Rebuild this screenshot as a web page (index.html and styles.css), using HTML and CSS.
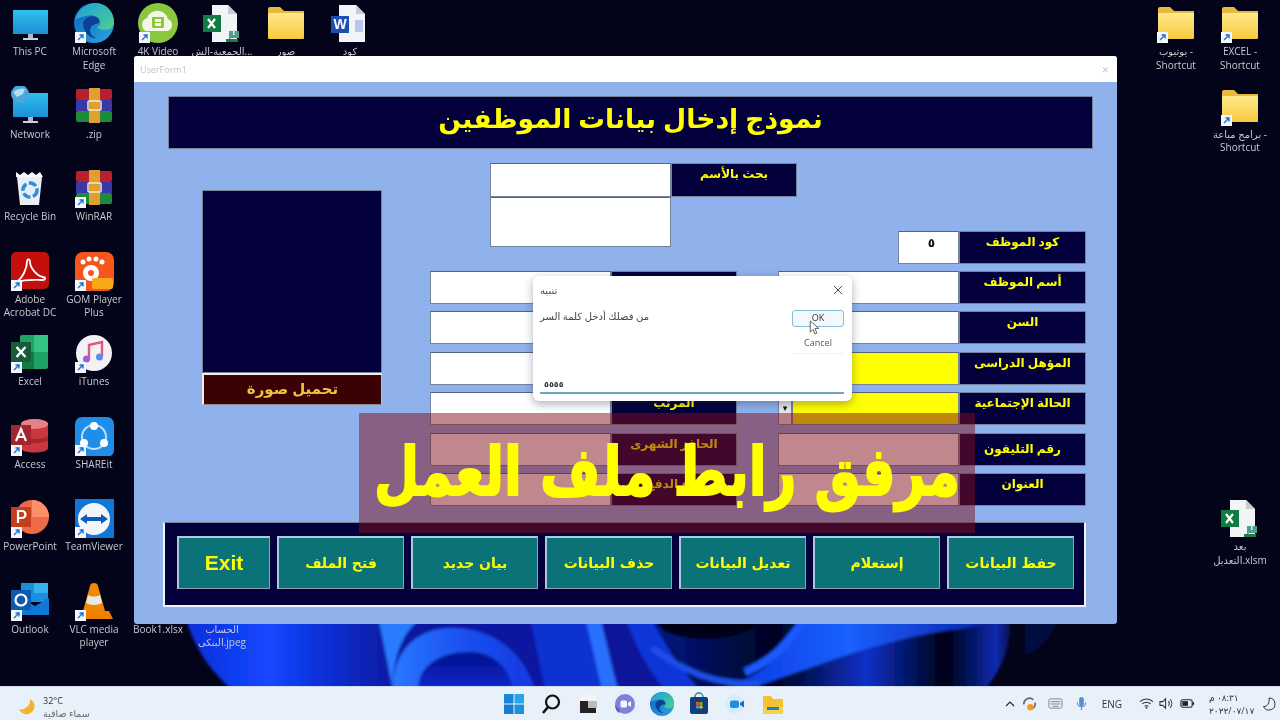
FILE: index.html
```html
<!DOCTYPE html>
<html lang="ar">
<head>
    <meta charset="UTF-8">
    <title>UserForm1</title>
    <link rel="stylesheet" href="styles.css">
</head>
<body>
<svg class="defs" width="0" height="0">
    <defs>
        <linearGradient id="gPc" x1="0" y1="0" x2="0" y2="1"><stop offset="0" stop-color="#2fc0ee"/><stop offset="1" stop-color="#1c8fd6"/></linearGradient>
        <linearGradient id="gFolder" x1="0" y1="0" x2="0" y2="1"><stop offset="0" stop-color="#ffe98a"/><stop offset="1" stop-color="#f7c93e"/></linearGradient>
        <linearGradient id="gEdge" x1="0" y1="0" x2="1" y2="1"><stop offset="0" stop-color="#0f5fc0"/><stop offset="1" stop-color="#2aa8e0"/></linearGradient>
        <linearGradient id="gEdgeTop" x1="0" y1="0" x2="1" y2="1"><stop offset="0" stop-color="#1a9fe0"/><stop offset="1" stop-color="#4fd08a"/></linearGradient>
        <linearGradient id="gWallA" x1="0" y1="0" x2="1" y2="0"><stop offset="0" stop-color="#0a2ed8"/><stop offset="0.4" stop-color="#1448ff"/><stop offset="0.65" stop-color="#0c30d8"/><stop offset="1" stop-color="#0a1aa0"/></linearGradient>
        <linearGradient id="gWallRing" x1="0" y1="0" x2="1" y2="0"><stop offset="0" stop-color="#2a78ff"/><stop offset="0.5" stop-color="#1a50f0"/><stop offset="1" stop-color="#1238e0"/></linearGradient>
        <linearGradient id="gWallIn" x1="0" y1="0" x2="0" y2="1"><stop offset="0" stop-color="#04108a"/><stop offset="1" stop-color="#0a28d0"/></linearGradient>
        <linearGradient id="gWallBase" x1="0" y1="0" x2="1" y2="0"><stop offset="0" stop-color="#06178a"/><stop offset="0.35" stop-color="#020320"/><stop offset="0.6" stop-color="#0a30c8"/><stop offset="0.82" stop-color="#000014"/><stop offset="0.96" stop-color="#0a2ab0"/><stop offset="1" stop-color="#06104a"/></linearGradient>
        <linearGradient id="gWallBand" x1="0" y1="0" x2="1" y2="0"><stop offset="0" stop-color="#0a38e0"/><stop offset="0.45" stop-color="#1a60ff"/><stop offset="1" stop-color="#0a20a0"/></linearGradient>
        <filter id="soft"><feGaussianBlur stdDeviation="1.500"/></filter>

        <g id="sc"><rect x="1" y="29" width="11" height="11" fill="#f4f8fc"/><path d="M4 37l5-5M5.500 32H9v3.500" fill="none" stroke="#1a6fd0" stroke-width="1.400"/></g>
        <g id="pc"><rect x="3" y="7" width="35" height="24" fill="url(#gPc)"/><rect x="18" y="31" width="5" height="4" fill="#aab8c4"/><rect x="13" y="35" width="15" height="2" fill="#c8d2da"/></g>
        <g id="net"><rect x="3" y="7" width="35" height="24" fill="url(#gPc)"/><rect x="18" y="31" width="5" height="4" fill="#aab8c4"/><rect x="13" y="35" width="15" height="2" fill="#c8d2da"/><circle cx="10" cy="8" r="9" fill="#4ba6dc"/><path d="M3 6q6-5 12-3l-2 5-6 3z" fill="#b8dcf0"/></g>
        <g id="edge"><circle cx="20" cy="20" r="20" fill="url(#gEdge)"/><path d="M1 17C4 5 14 0 21 0c11 0 19 8 19 19 0 4-3 8-8 8-5 0-8-1-9-3 3-1 4-3 3-6-2-5-8-7-14-5C7 14 3 15 1 17z" fill="url(#gEdgeTop)"/><path d="M9 20c2-6 8-8 13-6 3 1 4 4 3 6-4 1-9 2-9 8 0 3 3 6 7 7-7 1-14-6-14-15z" fill="#0d3f92"/></g>
        <g id="cloud"><circle cx="20" cy="20" r="20" fill="#8cc63f"/><path d="M8 28a7 7 0 0 1 1-13 11 11 0 0 1 21 1 6.500 6.500 0 0 1 0 12z" fill="#f2f7e8"/><rect x="14" y="14" width="12" height="11" rx="1" fill="#8cc63f"/><rect x="17" y="16" width="6" height="3" fill="#f2f7e8"/><rect x="17" y="20" width="6" height="3" fill="#f2f7e8"/></g>
        <g id="xdoc"><path d="M10 2h16l9 9v28H10z" fill="#f3f4f6"/><path d="M26 2l9 9h-9z" fill="#c9ccd2"/><rect x="1" y="12" width="18" height="17" fill="#107c41"/><path d="M6 16l7 9M13 16l-7 9" stroke="#fff" stroke-width="2.200"/><path d="M27 28h10v7h-8l-2 2z" fill="#4f9d8a"/><rect x="24" y="36" width="12" height="3" fill="#1c7a50"/><rect x="31" y="26" width="1.500" height="6" fill="#e8e8e8"/></g>
        <g id="folder"><path d="M2 6a2 2 0 0 1 2-2h10l4 4h20v27H2z" fill="#e9b93a"/><rect x="2" y="10" width="36" height="26" rx="1" fill="url(#gFolder)"/></g>
        <g id="word"><path d="M9 2h17l9 9v28H9z" fill="#f3f4f6"/><path d="M26 2l9 9h-9z" fill="#c9ccd2"/><rect x="25" y="17" width="8" height="12" fill="#b8c8ec"/><rect x="1" y="13" width="18" height="17" fill="#1b4fb4"/><text x="10" y="26" class="glyph" font-size="14">W</text></g>
        <g id="rar"><rect x="2" y="3" width="36" height="11" rx="2" fill="#b8202e"/><rect x="2" y="14" width="36" height="11" fill="#3a38a8"/><rect x="2" y="25" width="36" height="11" rx="2" fill="#1f8a3c"/><rect x="15" y="2" width="11" height="35" fill="#e0a030"/><rect x="14" y="15" width="13" height="9" rx="1" fill="none" stroke="#f4e8c8" stroke-width="1.500"/></g>
        <g id="bin"><path d="M7 9h25l-3 28H10z" fill="#e8eef4"/><path d="M6 4l4 3 4-3 4 3 4-3 4 3 4-3 3 5H6z" fill="#f8f9fa"/><circle cx="20" cy="22" r="7" fill="none" stroke="#2e8fd8" stroke-width="3.500" stroke-dasharray="8 2.500"/></g>
        <g id="pdf"><rect x="1" y="1" width="38" height="37" rx="5" fill="#c4100c"/><path d="M8 30c4-3 9-12 9-19 0-4 3-3 3 0 0 6 7 14 13 15 3 0 3 3-1 3-7 0-17-1-24 2z" fill="none" stroke="#fff" stroke-width="1.800"/></g>
        <g id="gom"><rect x="1" y="1" width="39" height="39" rx="8" fill="#f4561e"/><circle cx="17" cy="22" r="8" fill="#fff"/><circle cx="17" cy="22" r="3" fill="#f4561e"/><circle cx="9" cy="11" r="2.500" fill="#fff"/><circle cx="15" cy="8" r="2.500" fill="#fff"/><circle cx="22" cy="8" r="2.500" fill="#fff"/><circle cx="28" cy="11" r="2.500" fill="#fff"/><rect x="18" y="27" width="21" height="11" rx="2" fill="#f8a818"/></g>
        <g id="excel"><rect x="10" y="2" width="28" height="34" rx="2" fill="#21a366"/><rect x="24" y="2" width="14" height="17" fill="#33c481"/><rect x="10" y="19" width="14" height="17" fill="#107c41"/><rect x="1" y="9" width="20" height="20" fill="#185c37"/><path d="M6.500 14l9 10M15.500 14l-9 10" stroke="#fff" stroke-width="2.400"/></g>
        <g id="itunes"><circle cx="20" cy="20" r="18" fill="#f4f1f4"/><path d="M15 26V12l13-3v14" fill="none" stroke="#e0567e" stroke-width="2.400"/><circle cx="12.500" cy="26" r="3.500" fill="#9a62d8"/><circle cx="25.500" cy="24" r="3.500" fill="#5a8ce8"/></g>
        <g id="access"><path d="M11 8c0-6 27-6 27 0v24c0 6-27 6-27 0z" fill="#c8383e"/><ellipse cx="24.500" cy="8" rx="13.500" ry="5" fill="#e88088"/><path d="M11 20c4 4 23 4 27 0v4c-4 4-23 4-27 0z" fill="#a4262c"/><rect x="1" y="9" width="20" height="20" fill="#a4262c"/><path d="M6 25l5-12 5 12M8 21h6" fill="none" stroke="#fff" stroke-width="2.200"/></g>
        <g id="share"><rect x="1" y="1" width="39" height="40" rx="7" fill="#1e8ee8"/><circle cx="20" cy="21" r="12" fill="none" stroke="#bfe0f8" stroke-width="2"/><circle cx="20" cy="10" r="4" fill="#fff"/><circle cx="10" cy="27" r="4" fill="#fff"/><circle cx="30" cy="27" r="4" fill="#fff"/></g>
        <g id="ppt"><circle cx="22" cy="19" r="17" fill="#ed6c47"/><path d="M22 2a17 17 0 0 1 17 17H22z" fill="#ff8f6b"/><rect x="1" y="9" width="20" height="20" fill="#c43e1c"/><path d="M8 25V13h4a3.500 3.500 0 0 1 0 7H8" fill="none" stroke="#fff" stroke-width="2.200"/></g>
        <g id="tv"><rect x="1" y="1" width="39" height="40" fill="#0e77d8"/><circle cx="20" cy="21" r="16" fill="#f2f6fa"/><path d="M6 21l7-5v3h14v-3l7 5-7 5v-3H13v3z" fill="#0e5cb8"/></g>
        <g id="outlook"><rect x="11" y="2" width="27" height="19" fill="#1a8fe0"/><rect x="24" y="2" width="14" height="10" fill="#38b0f0"/><path d="M11 17l14 8 14-8v17H11z" fill="#0f78d4"/><rect x="1" y="9" width="20" height="20" fill="#0a5cb0"/><circle cx="11" cy="19" r="5.500" fill="none" stroke="#fff" stroke-width="2.200"/></g>
        <g id="vlc"><path d="M16 5c0-4 8-4 8 0l7 25H9z" fill="#f08800"/><path d="M14 14q6 3 12 0l2 8q-8 4-16 0z" fill="#e8e8e8"/><path d="M5 30h30l4 8H1z" fill="#f08000"/></g>
        <g id="tbWin"><rect x="2" y="2" width="9.500" height="9.500" fill="#1a86d8"/><rect x="12.500" y="2" width="9.500" height="9.500" fill="#28a4ea"/><rect x="2" y="12.500" width="9.500" height="9.500" fill="#1a7acc"/><rect x="12.500" y="12.500" width="9.500" height="9.500" fill="#1e90dc"/></g>
    </defs>
</svg>

<div class="screen">
    <div class="desktop">
        <svg class="wallpaper" viewBox="0 0 1280 686" width="1280" height="686">
            <g filter="url(#soft)">
                <path d="M185 616C195 650 210 670 232 690H395L378 616Z" fill="url(#gWallA)"/>
                <path d="M378 616H560L545 690H393Z" fill="#0a18a0"/>
                <path d="M393 690C392 650 418 628 452 628 495 628 525 655 535 690Z" fill="url(#gWallRing)"/>
                <path d="M378 616H425C402 628 392 660 393 690Z" fill="#2a7cff"/>
                <path d="M418 690C418 665 440 652 470 652 495 652 510 670 513 690Z" fill="url(#gWallIn)"/>
                <path d="M530 616H590L620 690H545C540 665 535 640 530 616Z" fill="#0a30d0"/>
                <path d="M585 616H600L618 690H602Z" fill="#2a70ff"/>
                <path d="M600 616H625C640 650 650 670 665 690H618Z" fill="#08169a"/>
                <path d="M625 616H650C665 645 680 665 700 690H665C645 665 635 645 625 616Z" fill="#0c34d8"/>
                <path d="M650 616H1010C1012 650 1000 670 985 690H700C685 665 665 645 650 616Z" fill="url(#gWallBase)"/>
                <path d="M800 616H1000C985 625 970 628 950 630 880 640 820 665 760 685 740 690 730 688 725 685 760 680 790 650 800 616Z" fill="url(#gWallBand)"/>
                <path d="M745 672C775 660 790 640 805 618" fill="none" stroke="#1a58ff" stroke-width="8"/>
                <path d="M652 648C690 675 715 684 760 684" fill="none" stroke="#1c50e8" stroke-width="6"/>
                <path d="M650 616H770C745 640 700 645 665 632Z" fill="#020216"/>
                <path d="M1025 616H1060C1050 640 1040 650 1025 655Z" fill="#060c40"/>
            </g>
        </svg>

        <div class="icon-grid icon-grid-left">
            <div class="item"><svg class="ico" viewBox="0 0 40 40"><use href="#pc"/></svg><span class="name">This PC</span></div>
            <div class="item"><svg class="ico" viewBox="0 0 40 40"><use href="#net"/></svg><span class="name">Network</span></div>
            <div class="item"><svg class="ico" viewBox="0 0 40 40"><use href="#bin"/></svg><span class="name">Recycle Bin</span></div>
            <div class="item"><svg class="ico" viewBox="0 0 40 40"><use href="#pdf"/><use href="#sc"/></svg><span class="name">Adobe Acrobat DC</span></div>
            <div class="item"><svg class="ico" viewBox="0 0 40 40"><use href="#excel"/><use href="#sc"/></svg><span class="name">Excel</span></div>
            <div class="item"><svg class="ico" viewBox="0 0 40 40"><use href="#access"/><use href="#sc"/></svg><span class="name">Access</span></div>
            <div class="item"><svg class="ico" viewBox="0 0 40 40"><use href="#ppt"/><use href="#sc"/></svg><span class="name">PowerPoint</span></div>
            <div class="item"><svg class="ico" viewBox="0 0 40 40"><use href="#outlook"/><use href="#sc"/></svg><span class="name">Outlook</span></div>

            <div class="item"><svg class="ico" viewBox="0 0 40 40"><use href="#edge"/><use href="#sc"/></svg><span class="name">Microsoft Edge</span></div>
            <div class="item"><svg class="ico" viewBox="0 0 40 40"><use href="#rar"/></svg><span class="name">.zip</span></div>
            <div class="item"><svg class="ico" viewBox="0 0 40 40"><use href="#rar"/><use href="#sc"/></svg><span class="name">WinRAR</span></div>
            <div class="item"><svg class="ico" viewBox="0 0 40 40"><use href="#gom"/><use href="#sc"/></svg><span class="name">GOM Player Plus</span></div>
            <div class="item"><svg class="ico" viewBox="0 0 40 40"><use href="#itunes"/><use href="#sc"/></svg><span class="name">iTunes</span></div>
            <div class="item"><svg class="ico" viewBox="0 0 40 40"><use href="#share"/><use href="#sc"/></svg><span class="name">SHAREit</span></div>
            <div class="item"><svg class="ico" viewBox="0 0 40 40"><use href="#tv"/><use href="#sc"/></svg><span class="name">TeamViewer</span></div>
            <div class="item"><svg class="ico" viewBox="0 0 40 40"><use href="#vlc"/><use href="#sc"/></svg><span class="name">VLC media player</span></div>

            <div class="item"><svg class="ico" viewBox="0 0 40 40"><use href="#cloud"/><use href="#sc"/></svg><span class="name">4K Video</span></div>
            <div class="item spacer"></div>
            <div class="item spacer"></div>
            <div class="item spacer"></div>
            <div class="item spacer"></div>
            <div class="item spacer"></div>
            <div class="item spacer"></div>
            <div class="item"><span class="ico"></span><span class="name">Book1.xlsx</span></div>

            <div class="item"><svg class="ico" viewBox="0 0 40 40"><use href="#xdoc"/></svg><span class="name">الجمعية-الش...</span></div>
            <div class="item spacer"></div>
            <div class="item spacer"></div>
            <div class="item spacer"></div>
            <div class="item spacer"></div>
            <div class="item spacer"></div>
            <div class="item spacer"></div>
            <div class="item"><span class="ico"></span><span class="name">الحساب البنكى.jpeg</span></div>

            <div class="item"><svg class="ico" viewBox="0 0 40 40"><use href="#folder"/></svg><span class="name">صور</span></div>
            <div class="item spacer"></div><div class="item spacer"></div><div class="item spacer"></div>
            <div class="item spacer"></div><div class="item spacer"></div><div class="item spacer"></div><div class="item spacer"></div>

            <div class="item"><svg class="ico" viewBox="0 0 40 40"><use href="#word"/></svg><span class="name">كود</span></div>
        </div>

        <div class="icon-grid icon-grid-right">
            <div class="item"><svg class="ico" viewBox="0 0 40 40"><use href="#folder"/><use href="#sc"/></svg><span class="name">يوتيوب -<br>Shortcut</span></div>
            <div class="item spacer"></div><div class="item spacer"></div><div class="item spacer"></div>
            <div class="item spacer"></div><div class="item spacer"></div><div class="item spacer"></div><div class="item spacer"></div>

            <div class="item"><svg class="ico" viewBox="0 0 40 40"><use href="#folder"/><use href="#sc"/></svg><span class="name">EXCEL -<br>Shortcut</span></div>
            <div class="item"><svg class="ico" viewBox="0 0 40 40"><use href="#folder"/><use href="#sc"/></svg><span class="name">برامج مباعة -<br>Shortcut</span></div>
            <div class="item spacer"></div><div class="item spacer"></div><div class="item spacer"></div><div class="item spacer"></div>
            <div class="item"><svg class="ico" viewBox="0 0 40 40"><use href="#xdoc"/></svg><span class="name">بعد<br>التعديل.xlsm</span></div>
        </div>

        <div class="window">
            <div class="titlebar">
                <span>UserForm1</span>
                <span class="title-close">✕</span>
            </div>
            <div class="form">
                <div class="form-header">نموذج إدخال بيانات الموظفين</div>

                <div class="form-mid">
                    <div class="photo-col">
                        <div class="photo"></div>
                        <div class="photo-btn">تحميل صورة</div>
                    </div>

                    <div class="fields-col">
                        <div class="top-row">
                            <div class="search">
                                <div class="input"></div>
                                <div class="label">بحث بالأسم</div>
                                <div class="input"></div>
                            </div>
                            <div class="code">
                                <div class="input input-code">٥</div>
                                <div class="label">كود الموظف</div>
                            </div>
                        </div>

                        <div class="field-grid">
                            <div class="input"></div><div class="label">تاريخ التعيين</div><i></i><div class="input"></div><div class="label">أسم الموظف</div>
                            <div class="input"></div><div class="label">الوظيفة</div><i></i><div class="input"></div><div class="label">السن</div>
                            <div class="input"></div><div class="label">القسم</div><i></i><div class="combo"><span class="drop"></span><div class="input input-yellow"></div></div><div class="label">المؤهل الدراسى</div>
                            <div class="input"></div><div class="label">المرتب</div><i></i><div class="combo"><span class="drop">▾</span><div class="input input-yellow"></div></div><div class="label">الحالة الإجتماعية</div>
                            <div class="input"></div><div class="label">الحافز الشهرى</div><i></i><div class="input"></div><div class="label label-low">رقم التليفون</div>
                            <div class="input"></div><div class="label">نوع الدفع</div><i></i><div class="input"></div><div class="label">العنوان</div>
                        </div>
                    </div>
                </div>

                <div class="actions">
                    <button class="action action-exit">Exit</button>
                    <button class="action">فتح الملف</button>
                    <button class="action">بيان جديد</button>
                    <button class="action">حذف البيانات</button>
                    <button class="action">تعديل البيانات</button>
                    <button class="action">إستعلام</button>
                    <button class="action">حفظ البيانات</button>
                </div>
            </div>
        </div>

        <div class="dialog">
            <div class="dialog-head">
                <span>تنبيه</span>
                <svg class="dialog-x" viewBox="0 0 10 10" width="10" height="10"><path d="M1 1l8 8M9 1l-8 8" stroke="#444" stroke-width="1"/></svg>
            </div>
            <div class="dialog-body">
                <p class="dialog-msg">من فضلك أدخل كلمة السر</p>
                <div class="dialog-btns">
                    <div class="btn-ok">OK</div>
                    <div class="btn-cancel">Cancel</div>
                </div>
            </div>
            <div class="dialog-input">٥٥٥٥</div>
            <svg class="cursor" viewBox="0 0 10 16" width="10" height="15"><path d="M1 1v12l3-3 2 5 2-1-2-5h4z" fill="#fff" stroke="#333" stroke-width="0.800"/></svg>
        </div>

        <div class="banner"><span class="banner-text">مرفق رابط ملف العمل</span></div>
    </div>

    <div class="taskbar">
        <div class="weather">
            <svg viewBox="0 0 18 18" width="18" height="18"><path d="M12 1a8 8 0 1 1-11 10c5 2 12-3 11-10z" fill="#f4b42a"/></svg>
            <div class="weather-text">
                <span>32°C</span>
                <span class="weather-sub">سماء صافية</span>
            </div>
        </div>
        <div class="tb-apps">
            <svg class="tb-ico" viewBox="0 0 24 24"><use href="#tbWin"/></svg>
            <svg class="tb-ico" viewBox="0 0 24 24"><circle cx="13.500" cy="10" r="6.500" fill="none" stroke="#111" stroke-width="2.200"/><path d="M9 15l-5 6" stroke="#111" stroke-width="2.600"/></svg>
            <svg class="tb-ico" viewBox="0 0 24 24"><rect x="4" y="3" width="17" height="18" fill="#f4f4f4"/><rect x="4" y="9" width="8" height="12" fill="#222"/><rect x="12" y="9" width="9" height="7" fill="#bbb"/><rect x="4" y="16" width="16" height="5" fill="#222"/></svg>
            <svg class="tb-ico" viewBox="0 0 24 24"><circle cx="12" cy="12" r="10" fill="#7b83d8"/><path d="M2 13a10 10 0 0 0 4 8l1-3z" fill="#5b5fc0"/><rect x="7.500" y="8.500" width="6.500" height="7" rx="1.500" fill="#f4f4ff"/><path d="M15 11l3-2v6l-3-2z" fill="#f4f4ff"/></svg>
            <svg class="tb-ico" viewBox="0 0 40 40"><use href="#edge"/></svg>
            <svg class="tb-ico" viewBox="0 0 24 24"><path d="M8 5a4 4 0 0 1 8 0" fill="none" stroke="#2d7fb8" stroke-width="1.500"/><rect x="3" y="5" width="18" height="17" rx="2" fill="#0f3f78"/><rect x="9" y="10" width="3" height="3" fill="#e85030"/><rect x="12.500" y="10" width="3" height="3" fill="#7ab828"/><rect x="9" y="13.500" width="3" height="3" fill="#2aa0e8"/><rect x="12.500" y="13.500" width="3" height="3" fill="#f4b820"/></svg>
            <svg class="tb-ico" viewBox="0 0 24 24"><circle cx="11" cy="12" r="9.500" fill="#d6ecf8"/><rect x="6" y="8.500" width="9" height="7.500" rx="2" fill="#1c8fe0"/><path d="M16 11l4-2.500v7l-4-2.500z" fill="#1470c0"/></svg>
            <svg class="tb-ico" viewBox="0 0 24 24"><path d="M2 4h8l2 3h10v15H2z" fill="#f2c230"/><rect x="2" y="15" width="20" height="7" fill="#f6d24a"/><rect x="6" y="15" width="12" height="3" fill="#1c7fc8"/></svg>
        </div>
        <div class="tray">
            <svg class="tray-caret" viewBox="0 0 10 6" width="10" height="6"><path d="M1 5l4-4 4 4" fill="none" stroke="#222" stroke-width="1.100"/></svg>
            <svg class="tray-ico" viewBox="0 0 16 16"><path d="M2 9a6 6 0 0 1 10-5M14 7a6 6 0 0 1-4 7" fill="none" stroke="#666" stroke-width="1.800"/><circle cx="9" cy="12" r="3.500" fill="#f29a20"/></svg>
            <svg class="tray-ico tray-kb" viewBox="0 0 16 12"><rect x="1" y="1" width="14" height="10" rx="1.500" fill="#e6eaf0" stroke="#888"/><path d="M3 4h10M3 6.500h10M5 9h6" stroke="#888"/></svg>
            <svg class="tray-ico tray-mic" viewBox="0 0 12 16"><rect x="3.500" y="1" width="5" height="10" rx="2.500" fill="#5a8cd0"/><path d="M1.500 7a4.500 4.500 0 0 0 9 0M6 12v3" fill="none" stroke="#5a8cd0" stroke-width="1.200"/></svg>
            <span class="tray-lang">ENG</span>
            <svg class="tray-ico tray-wifi" viewBox="0 0 16 12"><path d="M1 4a10 10 0 0 1 14 0M3.500 6.500a6.500 6.500 0 0 1 9 0M6 9a3 3 0 0 1 4 0" fill="none" stroke="#333" stroke-width="1.100"/><circle cx="8" cy="10.500" r="1" fill="#333"/></svg>
            <svg class="tray-ico tray-vol" viewBox="0 0 16 12"><path d="M1 4h3l3-3v10L4 8H1z" fill="none" stroke="#333" stroke-width="1.100"/><path d="M10 3.500a4 4 0 0 1 0 5M12 1.500a7 7 0 0 1 0 9" fill="none" stroke="#333" stroke-width="1.100"/></svg>
            <svg class="tray-ico tray-bat" viewBox="0 0 16 10"><rect x="1" y="1" width="12" height="8" rx="2" fill="none" stroke="#222" stroke-width="1.200"/><rect x="2.500" y="2.500" width="6" height="5" fill="#222"/><rect x="13.500" y="3.500" width="1.500" height="3" fill="#222"/></svg>
            <div class="clock">
                <span>٠٨:٣١ م</span>
                <span>٢٠٢٢/٠٧/١٧</span>
            </div>
            <svg class="tray-moon" viewBox="0 0 14 14" width="14" height="14"><path d="M7 1a6 6 0 1 1-5.500 8.500C5 10 8 6 7 1z" fill="none" stroke="#333" stroke-width="1"/></svg>
        </div>
    </div>
</div>
</body>
</html>
```

FILE: styles.css
```css
* {
    margin: 0;
    padding: 0;
    box-sizing: border-box;
}

body {
    background: #03031a;
    font-family: "Open Sans", "DejaVu Sans", sans-serif;
    overflow: hidden;
}

.defs {
    position: absolute;
}

.glyph {
    fill: #fff;
    font-family: "Liberation Sans", sans-serif;
    font-weight: 700;
    text-anchor: middle;
}

.screen {
    width: 1280px;
    height: 720px;
    display: flex;
    flex-direction: column;
    overflow: hidden;
    filter: blur(0.45px);
}

.desktop {
    position: relative;
    flex: 1;
    background: #03031a;
}

.wallpaper {
    position: absolute;
    left: 0;
    top: 0;
}

/* iconos del escritorio */
.icon-grid {
    position: absolute;
    top: 3px;
    display: grid;
    grid-auto-flow: column;
    grid-template-rows: repeat(8, 82.5px);
    grid-auto-columns: 64px;
}

.icon-grid-left {
    left: -2px;
}

.icon-grid-right {
    right: 8px;
}

.item {
    display: flex;
    flex-direction: column;
    align-items: center;
}

.ico {
    display: block;
    width: 40px;
    height: 40px;
    flex-shrink: 0;
}

.name {
    width: 64px;
    margin-top: 2px;
    color: #c9cacd;
    font-size: 10px;
    line-height: 13.5px;
    text-align: center;
}

/* ventana del formulario */
.window {
    position: absolute;
    left: 134px;
    top: 56px;
    width: 983px;
    height: 568px;
    background: #8fb1ec;
    border-radius: 3px;
    overflow: hidden;
}

.titlebar {
    height: 26px;
    background: #fff;
    padding: 0 8px 0 6px;
    display: flex;
    align-items: center;
    justify-content: space-between;
    color: #c4c4c4;
    font-size: 9px;
}

.form {
    padding: 14px 0 0 29px;
}

.form-header {
    width: 925px;
    height: 53px;
    margin-left: 5px;
    background: #03003c;
    border: 1px solid #75859c;
    color: #ffff00;
    font-size: 26.7px;
    font-weight: 700;
    line-height: 41px;
    text-align: center;
}

.form-mid {
    display: flex;
    margin-left: 5px;
}

.photo-col {
    width: 180px;
    margin: 41px 0 0 34px;
}

.photo {
    height: 183px;
    background: #03003c;
    border: 1px solid #75859c;
}

.photo-btn {
    height: 32px;
    background: #3a0204;
    border-left: 2px solid #f0f0e8;
    border-top: 2px solid #f0f0e8;
    border-right: 1px solid #c0c0c0;
    border-bottom: 1px solid #8a8a8a;
    color: #eec23a;
    font-size: 15px;
    font-weight: 700;
    line-height: 26px;
    text-align: center;
}

.fields-col {
    width: 656px;
    margin: 14px 0 0 48px;
}

.top-row {
    height: 101px;
    display: flex;
    justify-content: space-between;
}

.search {
    margin-left: 60px;
    display: grid;
    grid-template-columns: 181px 126px;
    grid-template-rows: 34px 50px;
    align-self: flex-start;
}

.code {
    display: grid;
    grid-template-columns: 61px 127px;
    height: 33px;
    align-self: flex-end;
}

.field-grid {
    margin-top: 7px;
    display: grid;
    grid-template-columns: 181px 126px 41px 181px 127px;
    grid-auto-rows: 33px;
    row-gap: 7.4px;
}

.input {
    background: #fff;
    border: 1px solid #74849c;
    border-top-color: #55657c;
}

.input-code {
    padding: 2px 23px 0 0;
    color: #111;
    font-size: 12px;
    font-weight: 700;
    text-align: right;
}

.input-yellow {
    flex: 1;
    background: #ffff00;
}

.label {
    background: #03003c;
    border: 1px solid #75859c;
    color: #ffff00;
    font-size: 12px;
    font-weight: 700;
    line-height: 19px;
    text-align: center;
}

.label-low {
    padding-top: 5px;
}

.combo {
    display: flex;
}

.drop {
    width: 14px;
    background: #e9e9e9;
    border: 1px solid #74849c;
    color: #111;
    font-size: 9px;
    line-height: 30px;
    text-align: center;
}

.actions {
    width: 923px;
    height: 85px;
    margin-top: 16px;
    padding: 13px 12px 0 12px;
    background: #03003c;
    border: 2px solid #f0f4fa;
    border-top: 1px solid #75859c;
    display: flex;
    gap: 7px;
    align-items: flex-start;
}

.action {
    flex: 0 0 127px;
    height: 53px;
    background: #0b7378;
    border: 1px solid #8fa0b0;
    border-top: 2px solid #b0c8dc;
    border-left: 2px solid #b0c8dc;
    color: #ffff00;
    font-family: "DejaVu Sans", sans-serif;
    font-size: 14px;
    font-weight: 700;
}

.action-exit {
    flex-basis: 93px;
    font-family: "Liberation Sans", sans-serif;
    font-size: 21px;
}

/* dialogo InputBox */
.dialog {
    position: absolute;
    left: 533px;
    top: 276px;
    width: 319px;
    height: 125px;
    background: #fff;
    border-radius: 6px;
    box-shadow: 0 3px 10px rgba(20, 30, 60, 0.35);
    padding: 0 8px 0 7px;
    color: #444;
    display: flex;
    flex-direction: column;
}

.dialog-head {
    height: 27px;
    display: flex;
    align-items: center;
    justify-content: space-between;
    font-size: 10px;
}

.dialog-x {
    margin-right: 1px;
}

.dialog-body {
    flex: 1;
    display: flex;
    justify-content: space-between;
}

.dialog-msg {
    padding-top: 6px;
    font-size: 10px;
}

.dialog-btns {
    width: 52px;
    padding-top: 7px;
    text-align: center;
    font-size: 9px;
}

.btn-ok {
    height: 17px;
    background: #f2f8fb;
    border: 1.5px solid #86bcd8;
    border-radius: 3px;
    color: #333;
    line-height: 14px;
}

.btn-cancel {
    margin-top: 9px;
    padding-bottom: 4px;
    border-bottom: 1px solid #f0f0f0;
    color: #555;
}

.dialog-input {
    height: 16px;
    border-bottom: 2px solid #6ea4c6;
    margin-bottom: 7px;
    padding-left: 4px;
    font-size: 8px;
    font-weight: 700;
    color: #333;
    line-height: 11px;
}

.cursor {
    position: absolute;
    left: 276px;
    top: 44px;
}

/* banda del video */
.banner {
    position: absolute;
    left: 359px;
    top: 413px;
    width: 616px;
    height: 120px;
    background: rgba(130, 15, 25, 0.5);
    color: #ffff00;
    font-family: "DejaVu Sans", sans-serif;
    font-size: 52px;
    font-weight: 700;
    -webkit-text-stroke: 1.5px #ffff00;
    line-height: 118px;
    text-align: center;
    white-space: nowrap;
}

.banner-text {
    display: inline-block;
    transform: scaleY(1.3);
}

/* barra de tareas */
.taskbar {
    height: 34px;
    background: #e8f0f9;
    border-top: 1px solid #cfdcee;
    display: flex;
    align-items: center;
    color: #333;
}

.weather {
    width: 502px;
    margin-top: 7px;
    padding-left: 18px;
    display: flex;
    align-items: center;
    gap: 7px;
}

.weather-text {
    display: flex;
    flex-direction: column;
    font-size: 9px;
    line-height: 13px;
}

.weather-sub {
    font-size: 9.5px;
    color: #666;
}

.tb-apps {
    display: flex;
    gap: 13px;
}

.tb-ico {
    width: 24px;
    height: 24px;
}

.tray {
    margin-left: auto;
    padding-right: 4px;
    display: flex;
    align-items: center;
}

.tray-ico {
    width: 15px;
    height: 15px;
}

.tray-caret {
    margin-right: 7px;
}

.tray-kb {
    margin-left: 11px;
}

.tray-mic {
    margin-left: 11px;
}

.tray-lang {
    margin-left: 13px;
    font-size: 10px;
}

.tray-wifi {
    margin-left: 17px;
}

.tray-vol {
    margin-left: 5px;
}

.tray-bat {
    margin-left: 6px;
}

.clock {
    width: 50px;
    margin-left: 14px;
    display: flex;
    flex-direction: column;
    align-items: flex-end;
    font-size: 9px;
    line-height: 13px;
    direction: rtl;
}

.tray-moon {
    margin-left: 3px;
}
```
